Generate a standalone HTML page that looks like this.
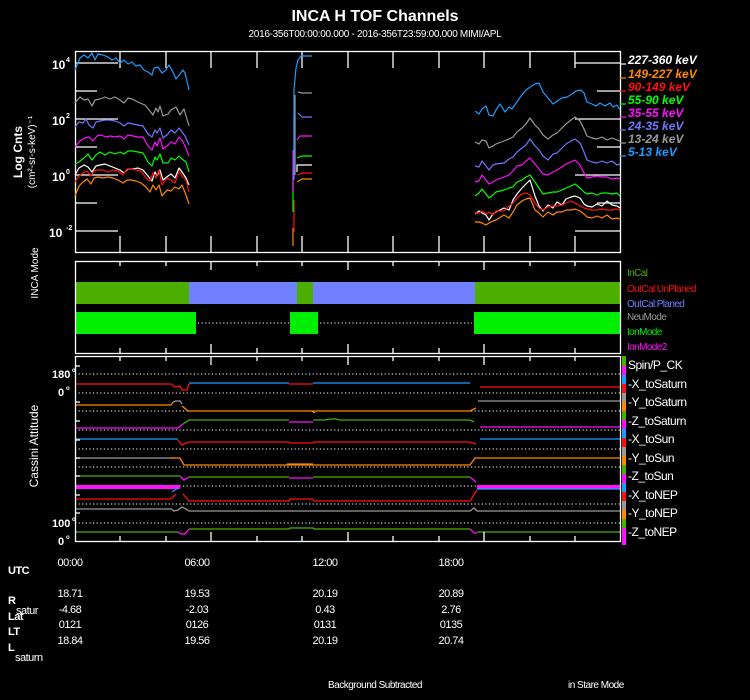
<!DOCTYPE html>
<html><head><meta charset="utf-8"><style>
html,body{margin:0;padding:0;background:#000;}
svg{display:block;font-family:"Liberation Sans",sans-serif;}
</style></head><body>
<svg width="750" height="700" viewBox="0 0 750 700" xmlns="http://www.w3.org/2000/svg">
<rect width="750" height="700" fill="#000"/>
<text x="375" y="21" fill="#fff" font-size="16" font-weight="bold" text-anchor="middle">INCA H TOF Channels</text>
<text x="375" y="37" fill="#fff" font-size="10" text-anchor="middle" letter-spacing="-0.3">2016-356T00:00:00.000 - 2016-356T23:59:00.000 MIMI/APL</text>

<!-- Panel 1 -->
<g stroke="#fff" fill="none" stroke-width="1.3">
<rect x="75.5" y="51.5" width="545" height="201"/>
<path d="M75 63H118M75 91H97M75 119H118M75 147H97M75 175H118M75 203H97M75 231H118"/>
<path d="M575 63H620M597 91H620M575 119H620M597 147H620M575 175H620M597 203H620M575 231H620"/>
<path d="M120 51v17M166 51v17M211 51v17M257 51v17M302 51v17M348 51v17M393 51v17M439 51v17M484 51v17M530 51v17M575 51v17M120 253v-17M166 253v-17M211 253v-17M257 253v-17M302 253v-17M348 253v-17M393 253v-17M439 253v-17M484 253v-17M530 253v-17M575 253v-17"/>
</g>
<g fill="#fff" font-size="12" font-weight="bold">
<text x="52" y="69">10</text><text x="66" y="62" font-size="7">4</text>
<text x="52" y="125">10</text><text x="66" y="118" font-size="7">2</text>
<text x="52" y="181">10</text><text x="66" y="174" font-size="7">0</text>
<text x="49" y="237">10</text><text x="66" y="230" font-size="7">-2</text>
</g>
<text transform="translate(22,152) rotate(-90)" fill="#fff" font-size="12" font-weight="bold" text-anchor="middle">Log Cnts</text>
<text transform="translate(35,152) rotate(-90)" fill="#fff" font-size="10" text-anchor="middle">(cm²-sr-s-keV)⁻¹</text>

<g fill="none" stroke-width="1.2" stroke-linejoin="round">
<!-- segment 1 -->
<polyline stroke="#1e9bff" points="75,70 80,58 84,55 88,58 92,53 95,60 98,54 103,55 108,57 112,60 116,58 120,63 124,60 128,64 132,62 136,66 140,65 144,70 148,72 152,75 154,68 158,67 162,73 166,70 169,65 173,72 176,79 180,74 183,70 185,73 189,90"/>
<polyline stroke="#999" points="75,103 80,97 84,100 88,99 92,106 95,100 100,99 105,97 110,99 115,97 120,100 124,103 128,98 132,99 136,101 140,103 145,105 149,110 153,115 156,108 158,112 160,106 163,116 168,114 171,110 176,107 180,115 184,109 189,126"/>
<polyline stroke="#7474ff" points="75,127 79,122 83,123 86,119 89,125 93,128 96,122 100,121 105,120 110,120 115,121 120,123 124,126 128,123 133,124 138,125 143,126 148,134 152,137 155,130 157,133 160,128 163,138 168,134 171,130 175,133 179,128 182,132 185,136 189,145"/>
<polyline stroke="#ff10ff" points="75,147 80,141 85,138 89,137 93,141 97,136 101,135 106,137 110,136 115,137 120,136 124,139 128,135 133,136 138,137 143,137 148,146 152,150 155,142 157,146 160,138 163,149 168,145 171,142 175,144 179,137 182,140 185,146 189,156"/>
<polyline stroke="#00ff00" points="75,164 79,162 84,158 88,154 92,160 96,155 100,152 105,155 110,152 115,154 120,152 124,154 128,151 133,151 138,152 143,153 148,162 152,166 155,157 157,160 160,154 163,163 168,163 171,158 175,160 179,156 182,159 186,162 189,172"/>
<polyline stroke="#fff" points="75,175 79,168 84,165 88,167 92,172 96,166 100,165 105,164 110,166 115,168 120,170 124,173 128,169 133,169 138,168 143,170 148,176 152,181 155,172 157,176 160,170 163,180 168,176 171,174 175,178 179,168 182,172 186,178 189,185"/>
<polyline stroke="#ff1010" points="75,182 79,176 83,173 87,171 91,176 94,171 98,170 103,170 108,172 113,170 118,171 123,175 127,169 131,169 136,170 141,171 146,178 150,181 153,173 156,178 159,170 162,185 167,178 171,180 175,183 179,171 182,176 186,180 189,192"/>
<polyline stroke="#ff8800" points="75,196 79,186 83,182 87,179 91,184 94,178 98,177 103,178 108,177 113,178 118,180 123,183 127,180 131,180 136,181 141,183 146,187 150,192 153,185 156,190 159,185 162,196 167,190 171,191 175,187 179,189 182,185 186,195 189,204"/>
<!-- spike -->
<path stroke="#ff8800" d="M293 246V228M297 182L302 179H312"/>
<path stroke="#ff1010" d="M294 232V200M297 175L302 173H312"/>
<path stroke="#00ff00" d="M293 212V170M297 158L302 156H312"/>
<path stroke="#ff10ff" d="M293 192V150M297 140L300 136H312"/>
<path stroke="#999" d="M295 175V95M298 92L302 93H312"/>
<path stroke="#7474ff" d="M294 152V115M298 113L302 117H312"/>
<path stroke="#fff" d="M297 172V165H312"/>
<path stroke="#1e9bff" d="M294 180V90 L296 68 L298 60 L301 56H312"/>
<!-- segment 3 -->
<polyline stroke="#1e9bff" points="475,111 479,114 482,109 486,106 489,115 493,116 496,110 500,104 505,112 509,107 512,109 521,96 525,91 530,87 535,84 539,83 543,92 548,98 553,104 557,101 562,98 567,97 572,94 576,91 581,90 584,93 587,102 592,104 596,106 600,103 605,106 610,103 613,107 617,105 620,110"/>
<polyline stroke="#999" points="475,142 479,144 482,140 486,141 489,148 493,146 496,144 504,141 509,139 513,137 517,132 522,128 526,124 530,118 535,125 539,129 543,135 548,139 553,135 557,133 562,128 566,124 571,120 575,117 580,121 584,129 587,136 592,138 597,139 602,137 607,140 612,138 617,140 620,141"/>
<polyline stroke="#7474ff" points="475,166 479,167 482,161 486,166 489,170 493,165 496,164 504,163 509,159 513,157 517,152 522,148 526,145 530,139 535,146 539,150 543,156 548,160 553,154 557,153 562,148 566,144 571,141 575,139 580,143 584,152 587,160 592,162 597,163 602,161 607,163 612,161 617,165 620,164"/>
<polyline stroke="#ff10ff" points="475,182 479,181 482,175 486,180 489,184 493,182 496,180 504,177 509,175 513,171 517,166 522,165 526,161 530,158 535,164 539,169 543,174 548,175 553,172 557,170 562,167 566,164 571,162 575,160 580,165 584,173 587,178 592,177 597,176 602,177 607,177 612,179 617,178 620,179"/>
<polyline stroke="#00ff00" points="475,196 479,193 482,189 486,194 489,198 493,195 496,192 504,190 509,188 513,187 517,182 522,180 526,177 530,175 535,182 539,188 543,194 548,193 553,192 557,192 562,190 566,188 571,186 575,184 580,188 584,192 587,194 592,193 597,195 602,193 607,193 612,194 617,193 620,196"/>
<polyline stroke="#fff" points="475,214 479,211 482,213 486,215 489,220 493,214 496,212 504,208 509,210 513,200 517,194 522,188 526,184 530,180 535,196 539,206 543,211 548,205 553,208 557,202 562,205 566,199 571,197 575,196 580,198 584,204 587,206 592,207 597,204 602,206 607,201 612,205 617,206 620,208"/>
<polyline stroke="#ff1010" points="475,213 479,213 482,211 486,214 489,212 493,215 496,211 504,211 509,206 513,203 517,198 522,194 526,193 530,195 535,203 539,208 543,210 548,207 553,206 557,206 562,205 566,203 571,201 575,203 580,206 584,208 587,209 592,210 597,210 602,209 607,210 612,210 617,209 620,210"/>
<polyline stroke="#ff8800" points="475,222 479,222 482,223 486,225 489,223 493,221 496,220 504,215 509,218 513,212 517,205 522,201 526,199 530,198 535,210 539,213 543,217 548,212 553,215 557,212 562,212 566,210 571,210 575,209 580,211 584,214 587,217 592,218 597,216 602,218 607,215 612,219 617,218 620,219"/>
</g>
<g stroke-width="1.2">
<path stroke="#fff" d="M620 64h6"/><path stroke="#ff8800" d="M620 78h6"/><path stroke="#ff1010" d="M620 91h6"/><path stroke="#00ff00" d="M620 104h6"/><path stroke="#ff10ff" d="M620 117h6"/><path stroke="#7474ff" d="M620 130h6"/><path stroke="#999" d="M620 143h6"/><path stroke="#1e9bff" d="M620 156h6"/>
</g>
<g font-size="12" font-weight="bold" font-style="italic">
<text x="628" y="64" fill="#fff">227-360 keV</text>
<text x="628" y="78" fill="#ff8800">149-227 keV</text>
<text x="628" y="91" fill="#ff1010">90-149 keV</text>
<text x="628" y="104" fill="#00ff00">55-90 keV</text>
<text x="628" y="117" fill="#ff10ff">35-55 keV</text>
<text x="628" y="130" fill="#7474ff">24-35 keV</text>
<text x="628" y="143" fill="#999">13-24 keV</text>
<text x="628" y="156" fill="#1e9bff">5-13 keV</text>
</g>

<!-- Panel 2 -->
<rect x="75" y="282" width="545" height="22" fill="#4caf00"/>
<rect x="189" y="282" width="108" height="22" fill="#7080ff"/>
<rect x="313" y="282" width="162" height="22" fill="#7080ff"/>
<rect x="75" y="312" width="121" height="22" fill="#00ee00"/>
<rect x="290" y="312" width="28" height="22" fill="#00ee00"/>
<rect x="474" y="312" width="146" height="22" fill="#00ee00"/>
<path d="M198 323H289M320 323H472" stroke="#fff" stroke-dasharray="1.2,2.4" stroke-width="1"/>
<g stroke="#fff" fill="none" stroke-width="1.3">
<rect x="75.5" y="261.5" width="545" height="92"/>
<path d="M120 261v5M166 261v5M211 261v9M257 261v5M302 261v5M348 261v9M393 261v5M439 261v5M484 261v9M530 261v5M575 261v5M120 353v-5M166 353v-5M211 353v-9M257 353v-5M302 353v-5M348 353v-9M393 353v-5M439 353v-5M484 353v-9M530 353v-5M575 353v-5"/>
</g>
<text transform="translate(38,273) rotate(-90)" fill="#fff" font-size="10" text-anchor="middle">INCA Mode</text>
<g font-size="10" letter-spacing="-0.6">
<text x="627" y="276" fill="#4caf00">InCal</text>
<text x="627" y="292" fill="#ff1010">OutCal:UnPlaned</text>
<text x="627" y="307" fill="#7080ff">OutCal:Planed</text>
<text x="627" y="320" fill="#999">NeuMode</text>
<text x="627" y="335" fill="#00ee00">IonMode</text>
<text x="627" y="350" fill="#ff10ff">IonMode2</text>
</g>

<!-- Panel 3 -->
<g stroke="#fff" stroke-dasharray="1.2,2.4" stroke-width="1">
<path d="M75 374H620M75 393H620M75 411H620M75 430H620M75 449H620M75 467H620M75 486H620M75 504H620M75 523H620"/>
</g>
<g fill="none" stroke-width="1.3">
<path stroke="#ff1010" d="M75 384H171L175 387L180 386L182 390H187L189 384M289 384H313M480 387H620"/>
<path stroke="#1e9bff" d="M189 383H289M313 383H470"/>
<path stroke="#ff8800" d="M75 405H171L173 402M182 406L188 411H470L476 408M312 411L315 413"/>
<path stroke="#999" d="M173 402L176 401H180L182 404M478 401H620"/>
<path stroke="#ff10ff" d="M75 428H178L183 424M289 422H313M480 427H620"/>
<path stroke="#4caf00" d="M183 424L189 420H289M313 420H325L330 419H336L340 420H470L474 422"/>
<path stroke="#1e9bff" d="M75 439H178M480 439H620"/>
<path stroke="#ff1010" d="M178 440L182 445L186 443L189 442H289L290 443H313L314 442H470L476 444"/>
<path stroke="#999" d="M75 458H171L175 458M478 458"/>
<path stroke="#ff8800" d="M171 458L180 458L184 465H470L475 458H620M287 464H313"/>
<path stroke="#4caf00" d="M75 476H180M189 477H289M313 477H470"/>
<path stroke="#ff10ff" d="M180 476L184 480L189 477M289 478H313M470 477L476 482"/>
<path stroke="#ff10ff" stroke-width="4" d="M75 487H180M477 487H620"/>
<path stroke="#1e9bff" d="M172 492L178 488M477 489H620"/>
<path stroke="#ff1010" d="M75 499H171L176 494M183 494L189 501H289L290 499H313L314 501H470L477 490"/>
<path stroke="#999" d="M75 509H171L174 511L178 510L182 507L186 509L189 511H470L474 508L477 511H620"/>
<path stroke="#4caf00" d="M75 532H178M189 529H289L290 528H313L314 529H470M477 532H620"/>
<path stroke="#ff10ff" d="M178 532L181 534H185L189 529M470 529L474 533H477"/>
</g>
<g stroke="#fff" fill="none" stroke-width="1.3">
<rect x="75.5" y="356.5" width="545" height="185"/>
<path d="M120 356v5M166 356v5M211 356v9M257 356v5M302 356v5M348 356v9M393 356v5M439 356v5M484 356v9M530 356v5M575 356v5M120 541v-5M166 541v-5M211 541v-9M257 541v-5M302 541v-5M348 541v-9M393 541v-5M439 541v-5M484 541v-9M530 541v-5M575 541v-5"/>
<path d="M75 366h5M75 402h5M75 421h5M75 440h5M75 458h5M75 476h5M75 495h5M75 513h5"/>
</g>
<g fill="#fff" font-size="11" font-weight="bold">
<text x="52" y="378">180</text><text x="72" y="372" font-size="6">o</text>
<text x="58" y="396">0</text><text x="66" y="390" font-size="6">o</text>
<text x="52" y="527">100</text><text x="72" y="521" font-size="6">o</text>
<text x="58" y="545">0</text><text x="66" y="539" font-size="6">o</text>
</g>
<text transform="translate(38,446) rotate(-90)" fill="#fff" font-size="12" text-anchor="middle">Cassini Attitude</text>
<g>
<rect x="622" y="356" width="4" height="10" fill="#4caf00"/><rect x="622" y="366" width="4" height="9" fill="#ff10ff"/>
<rect x="622" y="375" width="4" height="9" fill="#1e9bff"/><rect x="622" y="384" width="4" height="9" fill="#ff1010"/>
<rect x="622" y="393" width="4" height="9" fill="#999"/><rect x="622" y="402" width="4" height="9" fill="#ff8800"/>
<rect x="622" y="411" width="4" height="9" fill="#4caf00"/><rect x="622" y="420" width="4" height="9" fill="#ff10ff"/>
<rect x="622" y="429" width="4" height="9" fill="#1e9bff"/><rect x="622" y="438" width="4" height="9" fill="#ff1010"/>
<rect x="622" y="447" width="4" height="9" fill="#999"/><rect x="622" y="456" width="4" height="9" fill="#ff8800"/>
<rect x="622" y="465" width="4" height="9" fill="#4caf00"/><rect x="622" y="474" width="4" height="9" fill="#ff10ff"/>
<rect x="622" y="483" width="4" height="9" fill="#1e9bff"/><rect x="622" y="492" width="4" height="9" fill="#ff1010"/>
<rect x="622" y="501" width="4" height="9" fill="#999"/><rect x="622" y="510" width="4" height="9" fill="#ff8800"/>
<rect x="622" y="519" width="4" height="9" fill="#4caf00"/><rect x="622" y="528" width="4" height="9" fill="#ff10ff"/>
<rect x="622" y="537" width="4" height="8" fill="#ff10ff"/>
</g>
<g fill="#fff" font-size="12" letter-spacing="-0.5">
<text x="628" y="369">Spin/P_CK</text>
<text x="628" y="388">-X_toSaturn</text>
<text x="628" y="406">-Y_toSaturn</text>
<text x="628" y="425">-Z_toSaturn</text>
<text x="628" y="443">-X_toSun</text>
<text x="628" y="462">-Y_toSun</text>
<text x="628" y="480">-Z_toSun</text>
<text x="628" y="499">-X_toNEP</text>
<text x="628" y="517">-Y_toNEP</text>
<text x="628" y="536">-Z_toNEP</text>
</g>

<!-- Bottom ephemeris -->
<g fill="#fff" font-size="11" letter-spacing="-0.5">
<text x="8" y="574" font-weight="bold">UTC</text>
<text x="70" y="566" text-anchor="middle">00:00</text>
<text x="197" y="566" text-anchor="middle">06:00</text>
<text x="325" y="566" text-anchor="middle">12:00</text>
<text x="451" y="566" text-anchor="middle">18:00</text>
<text x="8" y="604" font-weight="bold">R</text><text x="16" y="614">satur</text>
<text x="8" y="620" font-weight="bold">Lat</text>
<text x="8" y="635" font-weight="bold">LT</text>
<text x="8" y="651" font-weight="bold">L</text><text x="15" y="661">saturn</text>
<text x="70" y="597" text-anchor="middle">18.71</text>
<text x="197" y="597" text-anchor="middle">19.53</text>
<text x="325" y="597" text-anchor="middle">20.19</text>
<text x="451" y="597" text-anchor="middle">20.89</text>
<text x="70" y="613" text-anchor="middle">-4.68</text>
<text x="197" y="613" text-anchor="middle">-2.03</text>
<text x="325" y="613" text-anchor="middle">0.43</text>
<text x="451" y="613" text-anchor="middle">2.76</text>
<text x="70" y="628" text-anchor="middle">0121</text>
<text x="197" y="628" text-anchor="middle">0126</text>
<text x="325" y="628" text-anchor="middle">0131</text>
<text x="451" y="628" text-anchor="middle">0135</text>
<text x="70" y="644" text-anchor="middle">18.84</text>
<text x="197" y="644" text-anchor="middle">19.56</text>
<text x="325" y="644" text-anchor="middle">20.19</text>
<text x="451" y="644" text-anchor="middle">20.74</text>
</g>
<g fill="#fff" font-size="10" letter-spacing="-0.5">
<text x="375" y="688" text-anchor="middle">Background Subtracted</text>
<text x="568" y="688">in Stare Mode</text>
</g>
</svg>
</body></html>
